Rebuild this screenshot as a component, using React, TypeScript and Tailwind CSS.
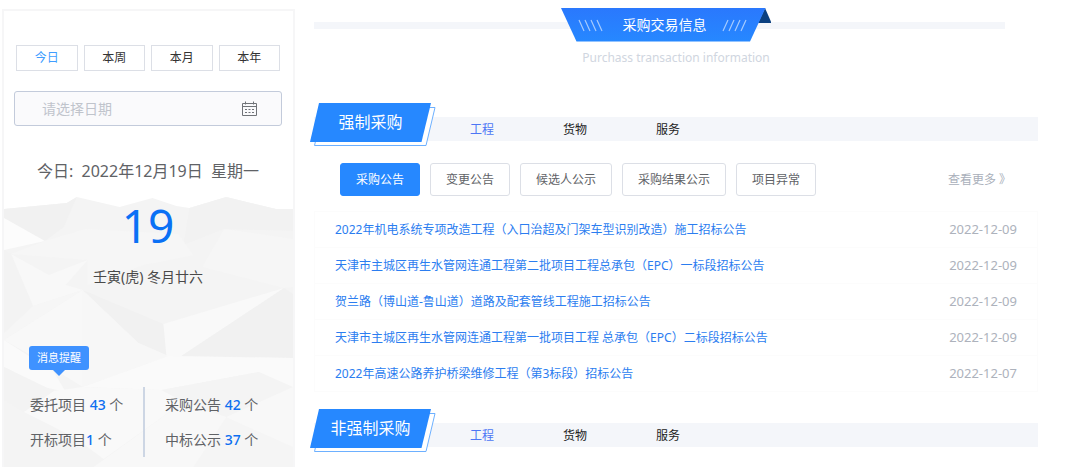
import React, { useState } from 'react';

const PERIODS = ['今日', '本周', '本月', '本年'];
const CATEGORIES = ['工程', '货物', '服务'];
const NOTICE_TYPES = ['采购公告', '变更公告', '候选人公示', '采购结果公示', '项目异常'];

const NOTICES = [
  { title: '2022年机电系统专项改造工程（入口治超及门架车型识别改造）施工招标公告', date: '2022-12-09' },
  { title: '天津市主城区再生水管网连通工程第二批项目工程总承包（EPC）一标段招标公告', date: '2022-12-09' },
  { title: '贺兰路（博山道-鲁山道）道路及配套管线工程施工招标公告', date: '2022-12-09' },
  { title: '天津市主城区再生水管网连通工程第一批项目工程 总承包（EPC）二标段招标公告', date: '2022-12-09' },
  { title: '2022年高速公路养护桥梁维修工程（第3标段）招标公告', date: '2022-12-07' },
];

// low-poly paper texture behind the lower part of the calendar panel
const FACETS = [
  { points: '0,12 63,6 73,0 116,10 149,1 173,9 186,11 223,0 273,12 290,12 290,270 0,270', fill: '#f4f4f4' },
  { points: '0,12 63,6 73,0 60,30 41,44 0,21', fill: '#f1f1f1' },
  { points: '186,11 223,0 273,12 290,12 290,34 221,32 180,48', fill: '#f2f2f2' },
  { points: '0,21 41,44 0,53', fill: '#fcfcfc' },
  { points: '41,44 82,32 175,37 190,58 140,68 84,88 84,63 7,57', fill: '#f6f6f6' },
  { points: '7,57 45,78 84,63 62,88 79,93 29,109', fill: '#f8f8f8' },
  { points: '221,32 290,42 290,90 281,91 199,70', fill: '#f6f6f6' },
  { points: '0,53 7,57 29,109 0,140', fill: '#f3f3f3' },
  { points: '29,109 79,93 0,143 0,136', fill: '#f6f6f6' },
  { points: '79,93 79,190 30,160 0,143', fill: '#f8f8f8' },
  { points: '79,93 160,127 165,159 135,146', fill: '#f1f1f1' },
  { points: '79,93 135,146 165,159 79,190', fill: '#f7f7f7' },
  { points: '281,91 160,127 163,159 178,159', fill: '#f9f9f9' },
  { points: '281,91 290,97 290,161 178,159', fill: '#f1f1f1' },
  { points: '0,143 50,175 62,195 40,190 0,170', fill: '#fafafa' },
  { points: '0,170 50,194 20,215 0,203', fill: '#f3f3f3' },
  { points: '165,159 290,161 290,190 256,175 158,193 79,190', fill: '#fafafa' },
  { points: '158,193 256,175 223,220 180,205', fill: '#f4f4f4' },
  { points: '50,194 79,190 158,193 180,205 100,262 70,240 20,215', fill: '#f9f9f9' },
  { points: '180,205 223,220 290,190 290,270 90,270', fill: '#f8f8f8' },
  { points: '0,250 60,245 85,262 90,270 0,270', fill: '#f4f4f4' },
  { points: '223,220 290,250 290,270 190,270', fill: '#f5f5f5' },
];

const CalendarIcon = () => (
  <svg className="w-4 h-4" viewBox="0 0 16 16" fill="none" stroke="#707378" strokeWidth="1">
    <path d="M1.5 2.5h14v12h-14zM1.5 5.5h14M4.5 0.5v3M12.500 0.5v3" />
    <path d="M4 8.5h2M7.500 8.5h2M11 8.5h2M4 11.5h2M7.500 11.5h2M11 11.5h2" />
  </svg>
);

const Stat = ({ label, count }: { label: string; count: number }) => (
  <div className="h-[35px] leading-[35px] whitespace-pre">
    {label}
    <span className="font-medium text-[#0d6ff0]">{count}</span> 个
  </div>
);

const CalendarPanel = () => {
  const [period, setPeriod] = useState('今日');

  return (
    <aside className="relative isolate w-[293px] shrink-0 border-2 border-b-0 border-[#f6f6f7] pt-[34px] pl-3 pr-[13px]">
      <svg
        className="absolute -z-10 left-0 bottom-0 w-full h-[270px]"
        viewBox="0 0 290 270"
        preserveAspectRatio="none"
        aria-hidden="true"
      >
        {FACETS.map((f) => (
          <polygon key={f.points} points={f.points} fill={f.fill} />
        ))}
      </svg>

      <div className="grid grid-cols-4 gap-1.5">
        {PERIODS.map((p) => (
          <button
            key={p}
            type="button"
            onClick={() => setPeriod(p)}
            className={`h-[26px] border border-[#dcdfe6] bg-white text-xs ${
              p === period ? 'text-[#409eff]' : 'text-[#333333]'
            }`}
          >
            {p}
          </button>
        ))}
      </div>

      <label className="mt-5 -mx-0.5 flex h-[35px] items-center rounded-[3px] border border-[#c3cbdb] bg-[#fafafc] pl-[27px] pr-6">
        <input
          type="text"
          aria-label="日期"
          placeholder="请选择日期"
          className="min-w-0 flex-1 bg-transparent text-sm outline-none placeholder:text-[#c0c4cc]"
        />
        <CalendarIcon />
      </label>

      <p className="mt-[33px] text-center text-base leading-6 whitespace-pre text-[#606266]">
        今日:  2022年12月19日  星期一
      </p>
      <p className="mt-[18px] text-center text-[46px] leading-12 text-[#0a70f5]">19</p>
      <p className="mt-[18px] text-center text-sm leading-5 text-[#4a4a4a]">壬寅(虎) 冬月廿六</p>

      <div className="mt-[59px] ml-[13px] w-[60px]">
        <div className="h-6 rounded-[3px] bg-[#3f92ff] text-center text-[11px] leading-6 text-white">消息提醒</div>
        <svg className="mx-auto w-3 h-1.5" viewBox="0 0 12 6" aria-hidden="true">
          <path d="M0 0h12L6 6z" fill="#3f92ff" />
        </svg>
      </div>

      <div className="mt-[11px] ml-[14px] flex text-sm text-[#606266]">
        <div className="w-[115px] border-r-2 border-[#cdd6e4]">
          <Stat label="委托项目 " count={43} />
          <Stat label="开标项目" count={1} />
        </div>
        <div className="pl-5">
          <Stat label="采购公告 " count={42} />
          <Stat label="中标公示 " count={37} />
        </div>
      </div>
    </aside>
  );
};

const PageTitle = () => (
  <div>
    <div className="mr-[33px] grid items-center">
      <div className="col-start-1 row-start-1 h-[7px] bg-[#f4f6fa]" />
      <h1 className="relative isolate col-start-1 row-start-1 ml-3 flex h-[34px] w-[210px] items-center justify-center justify-self-center pr-0.5 text-sm text-white">
        <svg className="absolute -z-10 inset-0 w-full h-full" viewBox="0 0 210 34" aria-hidden="true">
          <defs>
            <linearGradient id="ribbon" x1="0" y1="0" x2="0" y2="1">
              <stop offset="0" stopColor="#2a78fd" />
              <stop offset="1" stopColor="#2688ff" />
            </linearGradient>
          </defs>
          <path d="M204 0l6.5 15H197z" fill="#0b4080" />
          <path d="M0 0h204.500L189 33.500H15.500z" fill="url(#ribbon)" />
          <path
            d="M18 12l5 11M24 12l5 11M30 12l5 11M36 12l5 11M162 23l5-11M168 23l5-11M174 23l5-11M180 23l5-11"
            stroke="#a5cbff"
            strokeWidth="1.2"
          />
        </svg>
        采购交易信息
      </h1>
    </div>
    <p className="mt-1.5 text-center text-xs leading-5 text-[#d0d6e0]">Purchass transaction information</p>
  </div>
);

const SectionHeader = ({ title }: { title: string }) => {
  const [category, setCategory] = useState('工程');

  return (
    <header className="grid">
      <nav className="col-start-1 row-start-1 mb-[5px] flex h-6 items-center gap-[69px] self-end bg-[#f4f6fa] pt-px pl-[156px] text-xs">
        {CATEGORIES.map((c) => (
          <button
            key={c}
            type="button"
            onClick={() => setCategory(c)}
            className={c === category ? 'text-[#4d76f5]' : 'text-[#222222]'}
          >
            {c}
          </button>
        ))}
      </nav>
      <h2 className="relative isolate col-start-1 row-start-1 -ml-1 h-11 w-[126px] pr-[5px] text-center text-base leading-10 text-white">
        <svg className="absolute -z-10 inset-0 w-full h-full" viewBox="0 0 126 44" aria-hidden="true">
          <path d="M13.500 5.500H125L116 43.500H4.500z" fill="#ffffff" stroke="#6db0ff" strokeWidth="1" />
          <path d="M9 1h112l-9.500 39H0z" fill="#2688ff" />
        </svg>
        {title}
      </h2>
    </header>
  );
};

const NoticeList = () => {
  const [type, setType] = useState('采购公告');

  return (
    <div>
      <div className="mt-[17px] flex items-center gap-2.5 pl-[26px] pr-[27px] text-xs">
        {NOTICE_TYPES.map((t) => (
          <button
            key={t}
            type="button"
            onClick={() => setType(t)}
            className={`h-[33px] rounded-[3px] border px-[15px] ${
              t === type ? 'border-[#2688ff] bg-[#2688ff] text-white' : 'border-[#dcdfe6] bg-white text-[#606266]'
            }`}
          >
            {t}
          </button>
        ))}
        <a href="#more" className="ml-auto text-[#a9afba]">
          查看更多 》
        </a>
      </div>
      <table className="mt-[15px] w-full border-collapse border border-[#fcfcfc]">
        <tbody>
          {NOTICES.map((n) => (
            <tr key={n.title} className="h-9 border-b border-[#fcfcfc]">
              <td className="pl-5 text-xs">
                <a href="#notice" className="text-[#2b7df0]">
                  {n.title}
                </a>
              </td>
              <td className="pr-5 pb-0.5 text-right text-[13px] leading-5 text-[#adb2bc]">{n.date}</td>
            </tr>
          ))}
        </tbody>
      </table>
    </div>
  );
};

const App = () => {
  return (
    <div className="flex min-h-screen bg-white pt-[9px] pl-0.5 font-['Noto_Sans','Noto_Sans_CJK_SC',sans-serif]">
      <CalendarPanel />
      <main className="-mt-px ml-[19px] mr-[42px] min-w-0 flex-1">
        <PageTitle />
        <section className="mt-[34px]">
          <SectionHeader title="强制采购" />
          <NoticeList />
        </section>
        <section className="mt-4">
          <SectionHeader title="非强制采购" />
        </section>
      </main>
    </div>
  );
};

export default App;
